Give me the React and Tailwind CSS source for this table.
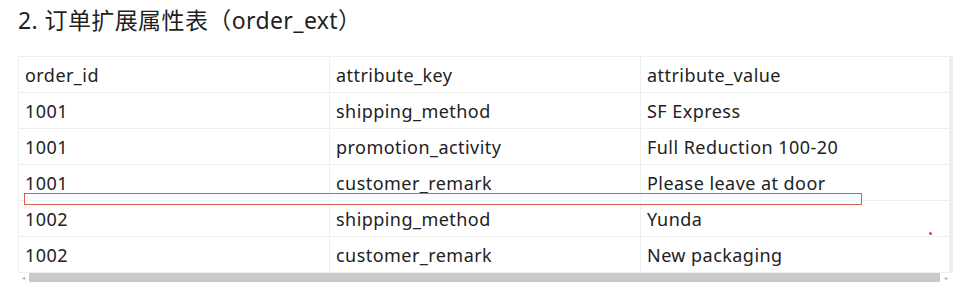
const rows = [
  ["order_id", "attribute_key", "attribute_value"],
  ["1001", "shipping_method", "SF Express"],
  ["1001", "promotion_activity", "Full Reduction 100-20"],
  ["1001", "customer_remark", "Please leave at door"],
  ["1002", "shipping_method", "Yunda"],
  ["1002", "customer_remark", "New packaging"],
];

export default function App() {
  return (
    <div
      className="relative w-[961px] h-[286px] bg-white text-[#222]"
      style={{ fontFamily: '"Noto Sans", "Noto Sans CJK SC", sans-serif' }}
    >
      <h2 className="pl-[18px] pt-[4px] h-[56px] text-[23px] leading-[32px] tracking-[0.4px] text-[#1f1f1f]">
        2. 订单扩展属性表（order_ext）
      </h2>

      <div className="flex ml-[18px] w-[935px]">
        <table className="w-[932px] border-collapse table-fixed text-[18px]">
          <colgroup>
            <col className="w-[311px]" />
            <col className="w-[311px]" />
            <col />
          </colgroup>
          <tbody>
            {rows.map((row, i) => (
              <tr key={i} className="h-[36px]">
                {row.map((cell, j) => (
                  <td
                    key={j}
                    className="border border-[#efefef] pl-[6px] py-0 align-middle leading-[24px] tracking-[0.45px]"
                  >
                    {cell}
                  </td>
                ))}
              </tr>
            ))}
          </tbody>
        </table>
        <div className="w-[3px] bg-[#ededed]" />
      </div>

      {/* horizontal scrollbar */}
      <div className="flex items-center ml-[18px] w-[935px] h-[9px]">
        <span className="w-[11px] text-[6px] text-[#aaa] leading-none text-center">◂</span>
        <div className="flex-1 h-[9px] bg-[#c9c9c9]" />
        <span className="w-[13px] text-[6px] text-[#aaa] leading-none text-center">▸</span>
      </div>

      {/* annotation overlay */}
      <div className="absolute left-[24px] top-[193px] w-[838px] h-[12px] border border-[#d9604f] bg-[#f3fbfb]/60" />
      <div className="absolute left-[929px] top-[232px] w-[3px] h-[3px] rounded-full bg-[#d9463a]" />
    </div>
  );
}
